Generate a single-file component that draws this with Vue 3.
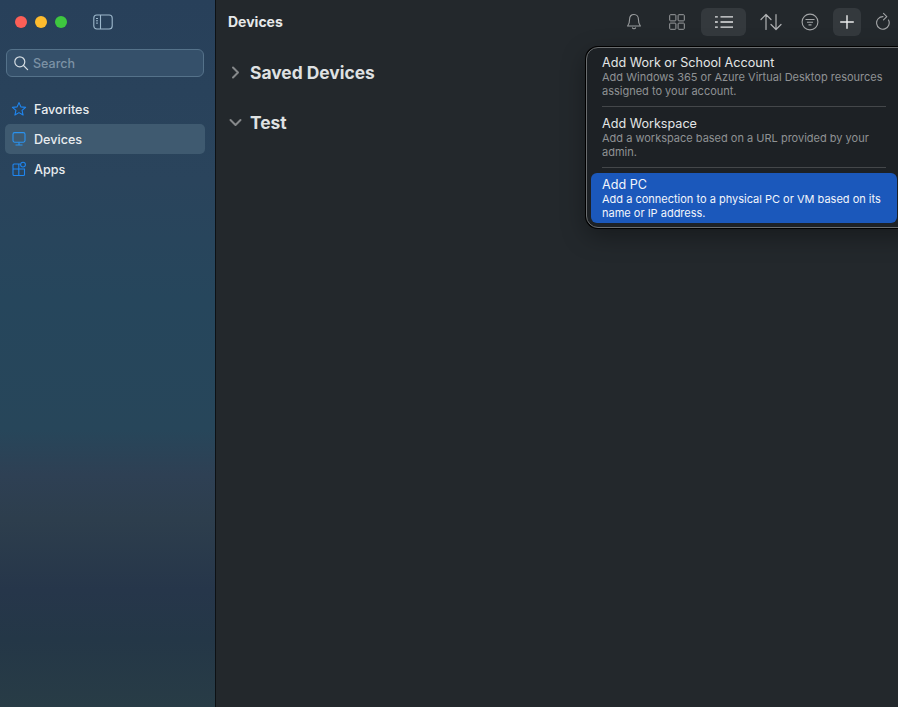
<script setup>
const nav = [
  { id: 'fav', label: 'Favorites' },
  { id: 'dev', label: 'Devices', active: true },
  { id: 'app', label: 'Apps' },
]
const menu = [
  { title: 'Add Work or School Account', desc: 'Add Windows 365 or Azure Virtual Desktop resources assigned to your account.' },
  { title: 'Add Workspace', desc: 'Add a workspace based on a URL provided by your admin.' },
  { title: 'Add PC', desc: 'Add a connection to a physical PC or VM based on its name or IP address.', active: true },
]
</script>

<template>
  <div class="window">
    <aside class="sidebar">
      <div class="titlebar">
        <span class="dot red"></span>
        <span class="dot yellow"></span>
        <span class="dot green"></span>
        <svg class="panel-icon" width="20" height="16" viewBox="0 0 20 16" fill="none" stroke="#9db8cc" stroke-width="1.1">
          <rect x="0.8" y="1" width="18.4" height="14" rx="3" />
          <line x1="7.5" y1="1" x2="7.5" y2="15" />
          <path d="M3 4.5h2M3 6.8h2M3 9.1h2" stroke-width="1" />
        </svg>
      </div>
      <div class="search">
        <svg width="16" height="16" viewBox="0 0 16 16" fill="none" stroke="#d5dde3" stroke-width="1.2">
          <circle cx="6.8" cy="6.8" r="5" />
          <line x1="10.5" y1="10.5" x2="14.6" y2="14.6" stroke-linecap="round" />
        </svg>
        <span>Search</span>
      </div>
      <nav class="nav">
        <div v-for="item in nav" :key="item.id" class="nav-item" :class="{ active: item.active }">
          <svg v-if="item.id === 'fav'" width="16" height="16" viewBox="0 0 16 16" fill="none" stroke="#1f86f0" stroke-width="1.1" stroke-linejoin="round">
            <path d="M8 1.6l1.9 4.3 4.7.45-3.55 3.1 1.05 4.6L8 11.6l-4.1 2.45 1.05-4.6L1.4 6.35l4.7-.45z" />
          </svg>
          <svg v-else-if="item.id === 'dev'" width="16" height="16" viewBox="0 0 16 16" fill="none" stroke="#2a93f0" stroke-width="1.1">
            <rect x="2" y="1.6" width="12" height="9.6" rx="1.6" />
            <path d="M8 11.2v2.6M4.5 14h7" />
          </svg>
          <svg v-else width="16" height="16" viewBox="0 0 16 16" fill="none" stroke="#1f86f0" stroke-width="1.1">
            <path d="M9 3H3a1 1 0 0 0-1 1v9.500a1 1 0 0 0 1 1h9.500a1 1 0 0 0 1-1V8H2M7.800 3v11.500" />
            <circle cx="12" cy="3.600" r="2.400" />
          </svg>
          <span>{{ item.label }}</span>
        </div>
      </nav>
    </aside>

    <main class="main">
      <header class="toolbar">
        <h1>Devices</h1>
        <div class="tools">
          <span class="tool bell">
            <svg width="16" height="18" viewBox="0 0 16 18" fill="none" stroke="#9a9d9f" stroke-width="1.1" stroke-linejoin="round">
              <path d="M8 1.500c-2.800 0-4.400 2.100-4.400 4.700 0 3-.6 5-2 6.800h12.800c-1.400-1.800-2-3.800-2-6.800 0-2.600-1.600-4.700-4.400-4.700z" />
              <path d="M6.300 14.500a1.800 1.800 0 0 0 3.400 0" />
            </svg>
          </span>
          <span class="tool grid">
            <svg width="16" height="16" viewBox="0 0 16 16" fill="none" stroke="#9a9d9f" stroke-width="1">
              <rect x="0.700" y="0.700" width="6.200" height="6.200" rx="0.800" />
              <rect x="9.100" y="0.700" width="6.200" height="6.200" rx="0.800" />
              <rect x="0.700" y="9.100" width="6.200" height="6.200" rx="0.800" />
              <rect x="9.100" y="9.100" width="6.200" height="6.200" rx="0.800" />
            </svg>
          </span>
          <span class="tool list on">
            <svg width="18" height="14" viewBox="0 0 18 14" fill="none" stroke="#e2e4e5" stroke-width="1.300">
              <path d="M0 1.800h2.800M5.500 1.800H18M0 7h2.800M5.500 7H18M0 12.200h2.800M5.500 12.200H18" />
            </svg>
          </span>
          <span class="tool sort">
            <svg width="22" height="18" viewBox="0 0 22 18" fill="none" stroke="#b0b2b4" stroke-width="1.200" stroke-linecap="round" stroke-linejoin="round">
              <path d="M6 16.500V1.500M1 6.500l5-5 5 5M16 1.500v15M11 11.500l5 5 5-5" />
            </svg>
          </span>
          <span class="tool filter">
            <svg width="18" height="18" viewBox="0 0 18 18" fill="none" stroke="#a3a5a7" stroke-width="1.100">
              <circle cx="9" cy="9" r="7.900" />
              <path d="M4.500 6.500h9M6 9.200h6M7.500 11.900h3" />
            </svg>
          </span>
          <span class="tool plus on">
            <svg width="14" height="14" viewBox="0 0 14 14" fill="none" stroke="#eceded" stroke-width="1.400" stroke-linecap="round">
              <path d="M7 .7v12.600M.7 7h12.600" />
            </svg>
          </span>
          <span class="tool refresh">
            <svg width="15" height="19" viewBox="0 0 15 19" fill="none" stroke="#a3a5a7" stroke-width="1.100" stroke-linecap="round" stroke-linejoin="round">
              <path d="M8 4.600A6.300 6.300 0 1 0 13.500 8" />
              <path d="M8.500 1.300L11.800 4.600 8.500 7.900" />
            </svg>
          </span>
        </div>
      </header>

      <section class="groups">
        <div class="group">
          <svg width="9" height="13" viewBox="0 0 9 13" fill="none" stroke="#85888a" stroke-width="2" stroke-linecap="round" stroke-linejoin="round">
            <path d="M2 1.500L7 6.500 2 11.500" />
          </svg>
          <span>Saved Devices</span>
        </div>
        <div class="group">
          <svg width="13" height="9" viewBox="0 0 13 9" fill="none" stroke="#85888a" stroke-width="2" stroke-linecap="round" stroke-linejoin="round">
            <path d="M1.500 2L6.500 7 11.500 2" />
          </svg>
          <span>Test</span>
        </div>
      </section>

      <div class="menu">
        <template v-for="(m, i) in menu" :key="m.title">
          <div v-if="i > 0" class="sep"></div>
          <div class="menu-item" :class="{ active: m.active }">
            <div class="mt">{{ m.title }}</div>
            <div class="md">{{ m.desc }}</div>
          </div>
        </template>
      </div>
    </main>
  </div>
</template>

<style>
html, body { margin: 0; background: #23282c; }
</style>

<style scoped>
.window {
  position: relative;
  display: flex;
  width: 898px;
  height: 707px;
  overflow: hidden;
  font-family: Inter, "Liberation Sans", sans-serif;
  color: #e9ebec;
}
.sidebar {
  flex: none;
  box-sizing: border-box;
  width: 216px;
  padding: 0 5px 0 5px;
  border-right: 1px solid #0d1114;
  background: linear-gradient(180deg, #28405a 0, #2a445c 180px, #26465c 300px, #27465a 430px, #2e4054 475px, #2d3e4d 520px, #26364a 590px, #243747 640px, #283c46 707px);
}
.titlebar {
  display: flex;
  align-items: center;
  height: 44px;
  padding-left: 10px;
}
.dot { width: 12px; height: 12px; border-radius: 50%; margin-right: 8px; }
.red { background: #fc5f57; }
.yellow { background: #febc2e; }
.green { background: #3ec73f; }
.panel-icon { margin-left: 18px; }
.search {
  display: flex;
  align-items: center;
  gap: 4px;
  box-sizing: border-box;
  width: 198px;
  height: 28px;
  margin: 5px 0 0 1px;
  padding-left: 6px;
  border: 1px solid #55728a;
  border-radius: 6px;
  background: #35506a;
  color: #7c92a5;
  font-size: 12.500px;
  font-weight: 500;
}
.nav { margin-top: 17px; }
.nav-item {
  display: flex;
  align-items: center;
  gap: 7px;
  width: 200px;
  height: 30px;
  box-sizing: border-box;
  padding-left: 6px;
  border-radius: 5px;
  font-size: 12.600px;
  font-weight: 500;
  color: #e8ecef;
}
.nav-item.active { background: #3f5a70; }
.main { position: relative; flex: 1; background: #23282c; }
.toolbar {
  display: flex;
  align-items: center;
  justify-content: space-between;
  height: 43px;
  padding: 0 8px 0 12px;
}
h1 { margin: 0; font-size: 14px; font-weight: 700; color: #e6e8e9; }
.tools { display: flex; align-items: center; }
.tool { display: flex; align-items: center; justify-content: center; height: 28px; border-radius: 6px; }
.tool.on { background: #34393d; }
.bell { width: 16px; margin-right: 27px; }
.grid { width: 16px; margin-right: 16px; }
.list { width: 45px; margin-right: 14px; }
.sort { width: 22px; margin-right: 19px; }
.filter { width: 18px; margin-right: 14px; }
.plus { width: 28px; margin-right: 14px; }
.refresh { width: 15px; margin-right: 0; }
.groups { padding: 4px 0 0 13px; }
.group {
  display: flex;
  align-items: center;
  height: 50px;
  font-size: 17.400px;
  font-weight: 700;
  color: #dfe1e2;
}
.group svg { width: 13px; margin-right: 8px; }
.menu {
  position: absolute;
  top: 47px;
  left: 370px;
  box-sizing: border-box;
  width: 330px;
  height: 181px;
  padding: 3px 4px;
  border: 1px solid #6a6d6f;
  border-radius: 12px;
  background: #1d2125;
  box-shadow: 0 0 0 1px #000, 0 8px 24px rgba(0, 0, 0, .35);
}
.menu-item {
  box-sizing: border-box;
  width: 308px;
  height: 50px;
  padding: 4px 11px 0;
  border-radius: 6px;
}
.menu-item.active { width: 306px; background: #1b58bb; }
.sep { height: 1px; margin: 5px 11px 5px 11px; width: 284px; background: #44474a; }
.mt { font-size: 12.600px; line-height: 15px; color: #e3e5e6; font-weight: 400; }
.md { width: 290px; font-size: 11px; line-height: 14px; color: #8f9294; font-weight: 400; }
.active .mt, .active .md { color: #f2f5fb; }
</style>
